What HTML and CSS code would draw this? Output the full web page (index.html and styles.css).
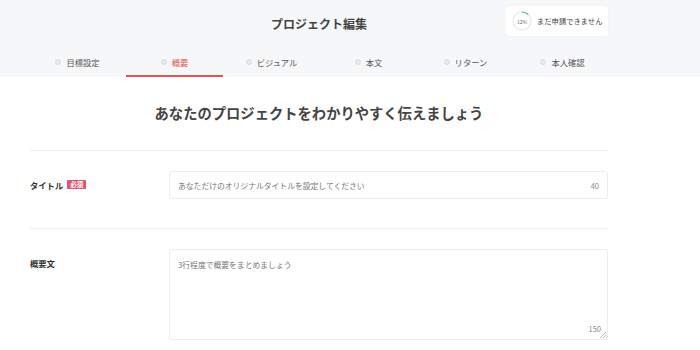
FILE: index.html
```html
<!DOCTYPE html>
<html lang="ja">
<head>
  <meta charset="UTF-8"/>
  <meta name="viewport" content="width=device-width,initial-scale=1"/>
  <title>プロジェクト編集</title>
  <link rel="stylesheet" href="styles.css">
</head>
<body>

  <header class="header">
    <div class="header-top">
      <h1 class="page-title">プロジェクト編集</h1>
      <div class="status">
        <div class="ring">
          <svg width="20" height="20" viewBox="0 0 20 20">
            <circle cx="10" cy="10" r="9" fill="none" stroke="#e6e6e6" stroke-width="1.2"/>
            <circle cx="10" cy="10" r="9" fill="none" stroke="#3cc0a0" stroke-width="1.2"
              stroke-dasharray="6.8 60" transform="rotate(-90 10 10)"/>
          </svg>
          <span class="ring-label">12%</span>
        </div>
        <span class="status-text">まだ申請できません</span>
      </div>
    </div>

    <!-- steps -->
    <nav class="tabs">
      <a class="tab"><span class="dot"></span>目標設定</a>
      <a class="tab active"><span class="dot"></span>概要</a>
      <a class="tab"><span class="dot"></span>ビジュアル</a>
      <a class="tab"><span class="dot"></span>本文</a>
      <a class="tab"><span class="dot"></span>リターン</a>
      <a class="tab"><span class="dot"></span>本人確認</a>
    </nav>
  </header>

  <main class="container">
    <h2 class="lead">あなたのプロジェクトをわかりやすく伝えましょう</h2>

    <div class="field">
      <div class="field-label">タイトル <span class="required">必須</span></div>
      <div class="input-box">
        <span class="placeholder">あなただけのオリジナルタイトルを設定してください</span>
        <span class="count">40</span>
      </div>
    </div>

    <div class="field">
      <div class="field-label">概要文</div>
      <div class="textarea-box">
        <span class="placeholder">3行程度で概要をまとめましょう</span>
        <span class="count count-bottom">150</span>
        <span class="grip"></span>
      </div>
    </div>
  </main>

</body>
</html>
```

FILE: styles.css
```css
* { box-sizing: border-box; margin: 0; padding: 0; }

body {
  background: #fff;
  color: #444;
  font-family: "Noto Sans CJK JP", "Noto Sans", sans-serif;
}

.header {
  background: #f6f7f8;
  height: 77px;
}

.header-top {
  position: relative;
  width: 580px;
  margin-left: 29px;
  height: 48px;
  display: flex;
  align-items: center;
  justify-content: center;
}

.page-title {
  font-size: 12px;
  font-weight: bold;
  color: #444;
  margin-top: -1px;
}

.status {
  position: absolute;
  top: 6px;
  right: 1px;
  width: 102px;
  height: 30px;
  background: #fff;
  border-radius: 3px;
  box-shadow: 0 0 2px rgba(0,0,0,0.06);
  display: flex;
  align-items: center;
  padding-left: 6px;
  gap: 5px;
}

.ring {
  position: relative;
  width: 20px;
  height: 20px;
}

.ring svg { display: block; }

.ring-label {
  position: absolute;
  inset: 0;
  display: flex;
  align-items: center;
  justify-content: center;
  font-size: 5px;
  color: #666;
}

.status-text {
  font-size: 7.3px;
  color: #444;
}

.tabs {
  display: flex;
  width: 582px;
  margin-left: 29px;
}

.tab {
  width: 97px;
  height: 29px;
  display: flex;
  align-items: center;
  justify-content: center;
  gap: 5px;
  font-size: 8.3px;
  color: #555;
  border-bottom: 2px solid transparent;
  padding-top: 1px;
}

.tab.active {
  color: #e5544f;
  border-bottom-color: #e5544f;
}

.dot {
  width: 6px;
  height: 6px;
  border-radius: 50%;
  background: #e9eaeb;
  border: 1px solid #dcdddf;
}

.container {
  width: 578px;
  margin-left: 30px;
}

.lead {
  font-size: 14.3px;
  font-weight: bold;
  color: #444;
  text-align: center;
  padding: 25px 0 27px;
  border-bottom: 1px solid #eeeeee;
}

.field {
  display: flex;
  padding: 20px 0 29px;
  border-bottom: 1px solid #eeeeee;
}

.field:last-child {
  border-bottom: none;
  padding-bottom: 0;
}

.field-label {
  width: 139px;
  font-size: 8.3px;
  font-weight: bold;
  color: #333;
  padding-top: 8px;
  display: flex;
  align-items: flex-start;
  gap: 4px;
}

.required {
  background: #e2566b;
  color: #fff;
  font-size: 6.5px;
  padding: 0 3px;
  line-height: 9px;
  border-radius: 1px;
  margin-top: 1px;
}

.input-box,
.textarea-box {
  position: relative;
  flex: 1;
  border: 1px solid #ececec;
  border-radius: 3px;
  background: #fff;
  font-size: 7.8px;
  color: #777;
}

.input-box {
  height: 28px;
  display: flex;
  align-items: center;
  justify-content: space-between;
  padding: 0 8px 0 8px;
}

.textarea-box {
  height: 91px;
  padding: 9px 8px;
}

.count { color: #888; font-size: 7.5px; }

.count-bottom {
  position: absolute;
  right: 6px;
  bottom: 5px;
}

.grip {
  position: absolute;
  right: 1px;
  bottom: 1px;
  width: 6px;
  height: 6px;
  background: linear-gradient(135deg, transparent 45%, #bbb 45%, #bbb 55%, transparent 55%, transparent 70%, #bbb 70%, #bbb 80%, transparent 80%);
}
```
